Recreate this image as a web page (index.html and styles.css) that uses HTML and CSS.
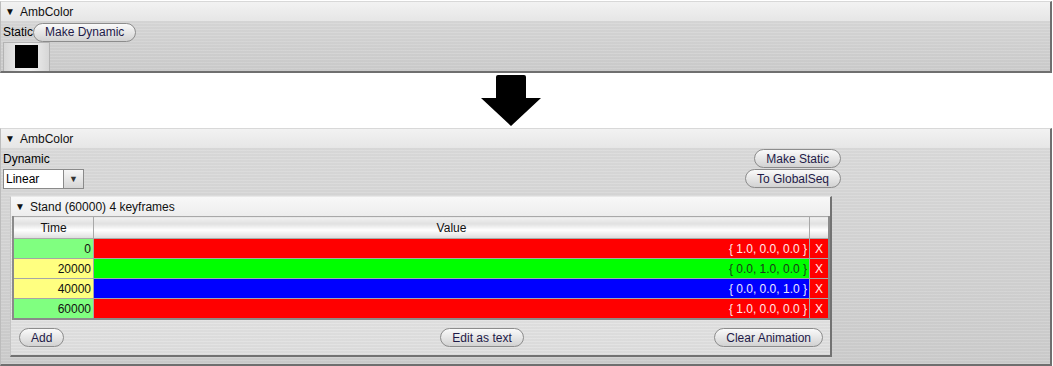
FILE: index.html
```html
<!DOCTYPE html>
<html lang="en">
<head>
  <meta charset="UTF-8">
  <title>AmbColor</title>
  <link rel="stylesheet" href="styles.css">
</head>
<body>
  <div class="panel panel-static">
    <div class="panel-title"><span class="tri">&#9660;</span>AmbColor</div>
    <div class="panel-body">
      <div class="static-row">
        <span class="label">Static</span>
        <button class="btn">Make Dynamic</button>
      </div>
      <div class="swatch-btn"><span class="swatch"></span></div>
    </div>
  </div>

  <div class="arrow-row">
    <svg width="62" height="52" viewBox="0 0 62 52">
      <path d="M16 2 Q16 0 18 0 L44 0 Q46 0 46 2 L46 23 L61 23 L31 51 L1 23 L16 23 Z" fill="#000"/>
    </svg>
  </div>

  <div class="panel panel-dynamic">
    <div class="panel-title"><span class="tri">&#9660;</span>AmbColor</div>
    <div class="panel-body">
      <div class="dyn-top">
        <div class="dyn-left">
          <span class="label">Dynamic</span>
          <div class="combo">
            <span class="combo-value">Linear</span>
            <span class="combo-arrow">&#9660;</span>
          </div>
        </div>
        <div class="dyn-right">
          <button class="btn">Make Static</button>
          <button class="btn">To GlobalSeq</button>
        </div>
      </div>

      <div class="subpanel">
        <div class="sub-title"><span class="tri">&#9660;</span>Stand (60000) 4 keyframes</div>
        <table class="keys">
          <thead>
            <tr><th class="c-time">Time</th><th class="c-value">Value</th><th class="c-del"></th></tr>
          </thead>
          <tbody>
            <tr><td class="t-green">0</td><td class="v-red">{ 1.0, 0.0, 0.0 }</td><td class="del">X</td></tr>
            <tr><td class="t-yellow">20000</td><td class="v-green">{ 0.0, 1.0, 0.0 }</td><td class="del">X</td></tr>
            <tr><td class="t-yellow">40000</td><td class="v-blue">{ 0.0, 0.0, 1.0 }</td><td class="del">X</td></tr>
            <tr><td class="t-green">60000</td><td class="v-red">{ 1.0, 0.0, 0.0 }</td><td class="del">X</td></tr>
          </tbody>
        </table>
        <div class="sub-buttons">
          <button class="btn">Add</button>
          <button class="btn btn-edit">Edit as text</button>
          <button class="btn btn-clear">Clear Animation</button>
        </div>
      </div>
    </div>
  </div>
</body>
</html>
```

FILE: styles.css
```css
body {
  margin: 0;
  padding: 0;
  background: #ffffff;
  font-family: "Liberation Sans", Arial, sans-serif;
  font-size: 12px;
  color: #000000;
}

.panel {
  width: 1049px;
  border-top: 1px solid #d8d8d8;
  border-left: 1px solid #bcbcbc;
  border-right: 2px solid #6f6f6f;
  border-bottom: 2px solid #6f6f6f;
  background:
    repeating-linear-gradient(180deg, rgba(255,255,255,0.08) 0 1px, rgba(0,0,0,0.02) 1px 3px),
    linear-gradient(180deg, #dcdcdc, #cdcdcd);
}

.panel-static {
  margin-top: 1px;
}

.panel-title {
  height: 19px;
  line-height: 20px;
  padding-left: 4px;
  background: linear-gradient(180deg, #f2f2f2, #e6e6e6);
  color: #111111;
}

.tri {
  display: inline-block;
  font-size: 10px;
  width: 15px;
  vertical-align: 1px;
}

.panel-body {
  padding: 1px 0 0 2px;
}

.static-row {
  display: flex;
  align-items: center;
  height: 20px;
}

.label {
  color: #000000;
}

.btn {
  height: 19px;
  padding: 0 11px;
  border: 1px solid #8c8c8c;
  border-radius: 10px;
  background: linear-gradient(180deg, #fafafa 0%, #e4e4e4 55%, #d2d2d2 100%);
  font-family: "Liberation Sans", Arial, sans-serif;
  font-size: 12px;
  color: #1e1a48;
  line-height: 16px;
}

.swatch-btn {
  width: 45px;
  height: 28px;
  border: 1px solid #b4b4b4;
  border-bottom: none;
  background: linear-gradient(90deg, #d6d6d6, #f0f0f0 40%, #f0f0f0 60%, #d6d6d6);
  display: flex;
  justify-content: center;
  align-items: flex-end;
}

.swatch {
  width: 23px;
  height: 23px;
  margin-bottom: 3px;
  background: #000000;
}

.arrow-row {
  height: 55px;
  padding-left: 480px;
  padding-top: 2px;
  box-sizing: border-box;
}

.arrow-row svg {
  display: block;
}

.panel-dynamic {
  height: 235px;
}

.dyn-top {
  width: 838px;
  display: flex;
  justify-content: space-between;
}

.dyn-left {
  display: flex;
  flex-direction: column;
  padding-top: 4px;
}

.dyn-left .label {
  height: 15px;
  line-height: 13px;
}

.combo {
  display: flex;
  width: 81px;
  height: 20px;
  margin-top: 1px;
  box-sizing: border-box;
}

.combo-value {
  flex: 1;
  background: #ffffff;
  border: 1px solid #8a8a8a;
  line-height: 18px;
  padding-left: 2px;
  font-size: 12px;
}

.combo-arrow {
  width: 19px;
  border: 1px solid #8a8a8a;
  border-left: none;
  background: linear-gradient(180deg, #f6f6f6, #d6d6d6);
  font-size: 9px;
  text-align: center;
  line-height: 18px;
  color: #333333;
}

.dyn-right {
  display: flex;
  flex-direction: column;
  align-items: flex-end;
  gap: 1px;
}

.subpanel {
  width: 819px;
  height: 158px;
  margin-left: 7px;
  margin-top: 7px;
  border-top: 1px solid #e8e8e8;
  border-left: 1px solid #c4c4c4;
  border-right: 2px solid #727272;
  border-bottom: 2px solid #727272;
  background:
    repeating-linear-gradient(180deg, rgba(255,255,255,0.12) 0 1px, rgba(0,0,0,0.02) 1px 3px),
    linear-gradient(180deg, #ececec, #dedede);
}

.sub-title {
  height: 19px;
  line-height: 20px;
  padding-left: 4px;
  background: linear-gradient(180deg, #f8f8f8, #ededed);
  color: #111111;
}

.keys {
  margin-left: 1px;
  width: 818px;
  border-collapse: collapse;
  border: 2px solid #8a8a8a;
  border-top: 1px solid #8a8a8a;
  font-size: 12px;
}

.keys th {
  height: 21px;
  padding: 0;
  font-weight: normal;
  color: #111111;
  border: 1px solid #a8a8a8;
  background: linear-gradient(180deg, #f2f2f2 0%, #e0e0e0 30%, #ffffff 60%, #dcdcdc 100%);
}

.c-time {
  width: 79px;
}

.c-del {
  width: 18px;
}

.keys td {
  height: 19px;
  padding: 0 2px 0 0;
  border: 1px solid #a6a6a6;
  text-align: right;
}

.t-green {
  background: #80ff80;
  color: #111111;
}

.t-yellow {
  background: #ffff80;
  color: #111111;
}

.v-red {
  background: #ff0000;
  color: #ffe8e8;
}

.v-green {
  background: #00ff00;
  color: #1a3a1a;
}

.v-blue {
  background: #0000ff;
  color: #e8e8ff;
}

.keys td.del {
  background: #ff0000;
  color: #ffe8e8;
  text-align: center;
  padding: 0;
}

.sub-buttons {
  display: flex;
  padding: 8px 7px 0 8px;
}

.btn-edit {
  margin-left: 376px;
}

.btn-clear {
  margin-left: auto;
}
```
